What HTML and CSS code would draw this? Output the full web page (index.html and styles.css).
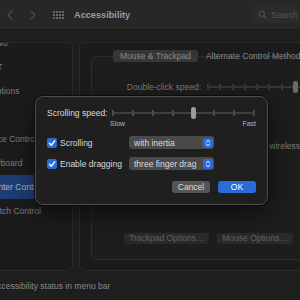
FILE: index.html
```html
<!DOCTYPE html>
<html lang="en">
<head>
    <meta charset="UTF-8">
    <meta name="viewport" content="width=device-width, initial-scale=1.0">
    <title>Accessibility</title>
    <link rel="stylesheet" href="styles.css">
</head>
<body>
    <div class="window">
        <header class="toolbar">
            <span class="nav-btn">
                <svg width="6" height="10" viewBox="0 0 6 10"><path d="M5 1 1 5l4 4" fill="none" stroke="currentColor" stroke-width="1.2" stroke-linecap="round" stroke-linejoin="round"/></svg>
            </span>
            <span class="nav-btn">
                <svg width="6" height="10" viewBox="0 0 6 10"><path d="M1 1l4 4-4 4" fill="none" stroke="currentColor" stroke-width="1.2" stroke-linecap="round" stroke-linejoin="round"/></svg>
            </span>
            <span class="grid-icon">
                <svg width="11" height="8" viewBox="0 0 11 8" fill="currentColor">
                    <rect x="0" y="0" width="2" height="2"/><rect x="3" y="0" width="2" height="2"/><rect x="6" y="0" width="2" height="2"/><rect x="9" y="0" width="2" height="2"/>
                    <rect x="0" y="3" width="2" height="2"/><rect x="3" y="3" width="2" height="2"/><rect x="6" y="3" width="2" height="2"/><rect x="9" y="3" width="2" height="2"/>
                    <rect x="0" y="6" width="2" height="2"/><rect x="3" y="6" width="2" height="2"/><rect x="6" y="6" width="2" height="2"/><rect x="9" y="6" width="2" height="2"/>
                </svg>
            </span>
            <h1 class="title">Accessibility</h1>
            <div class="search">
                <svg width="9" height="9" viewBox="0 0 9 9"><circle cx="3.7" cy="3.7" r="2.8" fill="none" stroke="currentColor" stroke-width="1"/><path d="M5.8 5.8 8.3 8.3" stroke="currentColor" stroke-width="1.1" stroke-linecap="round"/></svg>
                <span>Search</span>
            </div>
        </header>

        <div class="main">
            <aside class="sidebar">
                <ul class="side-list">
                    <li class="side-item">Audio</li>
                    <li class="side-item">RTT</li>
                    <li class="side-item">Captions</li>
                    <li class="side-head">Motor</li>
                    <li class="side-item">Voice Control</li>
                    <li class="side-item">Keyboard</li>
                    <li class="side-item side-item-active">Pointer Control</li>
                    <li class="side-item">Switch Control</li>
                    <li class="side-head">General</li>
                    <li class="side-item">Siri</li>
                </ul>
            </aside>

            <section class="panel">
                <div class="tabs">
                    <span class="tab tab-active">Mouse &amp; Trackpad</span>
                    <span class="tab">Alternate Control Methods</span>
                </div>
                <div class="group">
                    <div class="setting-row">
                        <span class="setting-label">Double-click speed:</span>
                        <div class="bg-slider">
                            <span class="bg-tick"></span><span class="bg-tick"></span><span class="bg-tick"></span><span class="bg-tick"></span>
                            <span class="bg-tick"></span><span class="bg-tick"></span><span class="bg-tick"></span><span class="bg-tick"></span>
                            <span class="bg-tick"></span>
                            <span class="bg-knob"></span>
                        </div>
                    </div>
                    <div class="check-row">
                        <span class="bg-check"></span>
                        <span>Ignore built-in trackpad when mouse or wireless trackpad is present</span>
                    </div>
                    <div class="group-buttons">
                        <span class="bg-button">Trackpad Options…</span>
                        <span class="bg-button">Mouse Options…</span>
                    </div>
                </div>
            </section>
        </div>

        <div class="status-row">
            <span class="bg-check"></span>
            <span>Show accessibility status in menu bar</span>
        </div>

        <div class="sheet">
            <div class="speed-row">
                <span class="speed-label">Scrolling speed:</span>
                <div class="speed">
                    <div class="slider">
                        <span class="tick"></span><span class="tick"></span><span class="tick"></span><span class="tick"></span>
                        <span class="tick"></span><span class="tick"></span><span class="tick"></span><span class="tick"></span>
                        <span class="knob"></span>
                    </div>
                    <div class="speed-labels">
                        <span>Slow</span>
                        <span>Fast</span>
                    </div>
                </div>
            </div>

            <div class="option-row">
                <label class="option">
                    <span class="checkbox">
                        <svg width="10" height="10" viewBox="0 0 10 10"><path d="M2.4 5.3 4.3 7.2 7.7 2.9" fill="none" stroke="#fff" stroke-width="1.5" stroke-linecap="round" stroke-linejoin="round"/></svg>
                    </span>
                    Scrolling
                </label>
                <div class="popup">
                    <span>with inertia</span>
                    <span class="stepper">
                        <svg width="10" height="10" viewBox="0 0 10 10"><path d="M3.2 4 5 2.3 6.8 4M3.2 6 5 7.7 6.8 6" fill="none" stroke="#fff" stroke-width="1" stroke-linecap="round" stroke-linejoin="round"/></svg>
                    </span>
                </div>
            </div>

            <div class="option-row">
                <label class="option">
                    <span class="checkbox">
                        <svg width="10" height="10" viewBox="0 0 10 10"><path d="M2.4 5.3 4.3 7.2 7.7 2.9" fill="none" stroke="#fff" stroke-width="1.5" stroke-linecap="round" stroke-linejoin="round"/></svg>
                    </span>
                    Enable dragging
                </label>
                <div class="popup">
                    <span>three finger drag</span>
                    <span class="stepper">
                        <svg width="10" height="10" viewBox="0 0 10 10"><path d="M3.2 4 5 2.3 6.8 4M3.2 6 5 7.7 6.8 6" fill="none" stroke="#fff" stroke-width="1" stroke-linecap="round" stroke-linejoin="round"/></svg>
                    </span>
                </div>
            </div>

            <div class="sheet-buttons">
                <button class="btn">Cancel</button>
                <button class="btn btn-primary">OK</button>
            </div>
        </div>
    </div>
</body>
</html>
```

FILE: styles.css
```css
body {
    margin: 0;
    padding: 0;
    background: #1e1e1e;
    font-family: "Liberation Sans", Arial, sans-serif;
    font-size: 8.5px;
    color: #7c7c7c;
}

.window {
    position: relative;
    width: 300px;
    height: 300px;
    overflow: hidden;
    display: flex;
    flex-direction: column;
}

/* toolbar */
.toolbar {
    flex: 0 0 30px;
    display: flex;
    align-items: center;
    padding-left: 7px;
    background: #272727;
    border-bottom: 1px solid #1a1a1a;
    box-sizing: border-box;
}

.nav-btn {
    display: flex;
    color: #4b4b4b;
    margin-right: 17px;
}

.grid-icon {
    display: flex;
    color: #686868;
    margin-right: 10px;
}

.title {
    margin: 0;
    font-size: 9.2px;
    font-weight: bold;
    color: #9c9c9c;
}

.search {
    margin-left: auto;
    margin-right: -26px;
    width: 68px;
    height: 17px;
    display: flex;
    align-items: center;
    gap: 4px;
    padding-left: 6px;
    border-radius: 5px;
    background: #2b2b2b;
    color: #555;
    font-size: 8.5px;
}

/* main area */
.main {
    display: flex;
    gap: 6px;
    margin-top: 12px;
    height: 229px;
}

.sidebar {
    flex: 0 0 113px;
    margin-left: -40px;
    border: 1px solid #2a2a2a;
    border-radius: 6px;
    background: #1b1b1b;
    overflow: hidden;
    box-sizing: border-box;
}

.side-list {
    list-style: none;
    margin: -12px 0 0;
    padding: 0 4px;
}

.side-item,
.side-head {
    height: 24px;
    line-height: 24px;
    padding-left: 21px;
    white-space: nowrap;
    color: #7e7e7e;
}

.side-head {
    padding-left: 0;
    font-size: 7px;
    font-weight: bold;
    color: #555;
}

.side-item-active {
    background: #1d3e74;
    border-radius: 4px;
    color: #aab6c9;
}

.panel {
    flex: 0 0 262px;
    display: flex;
    flex-direction: column;
    border: 1px solid #2a2a2a;
    border-radius: 6px;
    background: #1b1b1b;
    padding: 7px 0 10px 11px;
    box-sizing: border-box;
}

.tabs {
    position: relative;
    z-index: 1;
    display: flex;
    gap: 1px;
    padding-left: 22px;
    height: 12px;
    line-height: 12px;
    white-space: nowrap;
}

.tab {
    padding: 0 7px;
    border-radius: 3px;
    color: #8a8a8a;
}

.tab-active {
    background: #363636;
}

.group {
    flex: 1;
    display: flex;
    flex-direction: column;
    margin-top: -6px;
    padding: 24px 0 15px;
    border: 1px solid #2b2b2b;
    border-radius: 5px;
    background: #1d1d1d;
}

.setting-row {
    display: flex;
    align-items: center;
    gap: 6px;
    height: 12px;
}

.setting-label {
    flex: 0 0 109px;
    text-align: right;
    white-space: nowrap;
}

.bg-slider {
    position: relative;
    display: flex;
    align-items: center;
    gap: 10.3px;
    height: 12px;
    background: linear-gradient(#363636, #363636) 0 50% / 100% 2px no-repeat;
}

.bg-tick {
    flex: 0 0 2px;
    height: 6px;
    background: #383838;
}

.bg-knob {
    position: absolute;
    left: 86px;
    top: 0;
    width: 5px;
    height: 12px;
    border-radius: 3px;
    background: #6a6a6a;
}

.check-row {
    display: flex;
    align-items: center;
    gap: 4px;
    margin-top: 47px;
    padding-left: 14px;
    height: 12px;
    white-space: nowrap;
}

.bg-check {
    flex: 0 0 10px;
    height: 10px;
    border-radius: 2px;
    background: #2c2c2c;
}

.group-buttons {
    display: flex;
    gap: 8px;
    margin-top: auto;
    padding-left: 32px;
}

.bg-button {
    height: 11px;
    line-height: 11px;
    padding: 0 5px;
    border-radius: 3px;
    background: #2a2a2a;
    color: #626262;
    white-space: nowrap;
}

.status-row {
    display: flex;
    align-items: center;
    gap: 4px;
    margin: 9px 0 0 -45px;
    height: 12px;
    white-space: nowrap;
    color: #8a8a8a;
}

/* sheet dialog */
.sheet {
    position: absolute;
    left: 35px;
    top: 96px;
    width: 233px;
    height: 109px;
    box-sizing: border-box;
    padding: 10px 11px 11px 11px;
    display: flex;
    flex-direction: column;
    background: #1f1f1f;
    border: 1px solid #4d4d4d;
    border-radius: 8px;
    box-shadow: 0 0 0 1px #0c0c0c, 0 8px 24px rgba(0, 0, 0, 0.55);
    color: #dadada;
}

.speed-row {
    display: flex;
    align-items: flex-start;
}

.speed-label {
    flex: 0 0 65px;
    line-height: 12px;
    white-space: nowrap;
}

.speed {
    width: 143px;
}

.slider {
    position: relative;
    display: flex;
    justify-content: space-between;
    align-items: center;
    height: 12px;
    background: linear-gradient(#3e3e3e, #3e3e3e) 0 50% / 100% 2px no-repeat;
}

.tick {
    width: 2px;
    height: 6px;
    background: #4b4b4b;
}

.knob {
    position: absolute;
    left: 79px;
    top: 0;
    width: 5px;
    height: 12px;
    border-radius: 3px;
    background: #9c9c9c;
}

.speed-labels {
    display: flex;
    justify-content: space-between;
    margin: 0 -1px 0 -2px;
    height: 9px;
    line-height: 9px;
    font-size: 7px;
    color: #b4b4b4;
}

.option-row {
    display: grid;
    grid-template-columns: 82px 85px;
    align-items: center;
    height: 13px;
    margin-top: 8px;
}

.option-row:first-of-type {
    margin-top: 9px;
}

.option {
    display: flex;
    align-items: center;
    gap: 3px;
    white-space: nowrap;
}

.checkbox {
    display: flex;
    width: 10px;
    height: 10px;
    border-radius: 2px;
    background: #2b6ad9;
}

.popup {
    display: flex;
    align-items: center;
    justify-content: space-between;
    height: 13px;
    padding: 0 1px 0 5px;
    border-radius: 3px;
    background: #4a4a4a;
    white-space: nowrap;
}

.stepper {
    display: flex;
    width: 10px;
    height: 10px;
    border-radius: 2px;
    background: #2b6ad9;
}

.sheet-buttons {
    display: flex;
    justify-content: flex-end;
    gap: 8px;
    margin-top: auto;
}

.btn {
    width: 38px;
    height: 12px;
    padding: 0;
    border: none;
    border-radius: 3px;
    background: #555555;
    color: #dcdcdc;
    font-family: inherit;
    font-size: 8.5px;
    line-height: 12px;
}

.btn-primary {
    background: #2b6ad9;
    color: #fff;
}
```
